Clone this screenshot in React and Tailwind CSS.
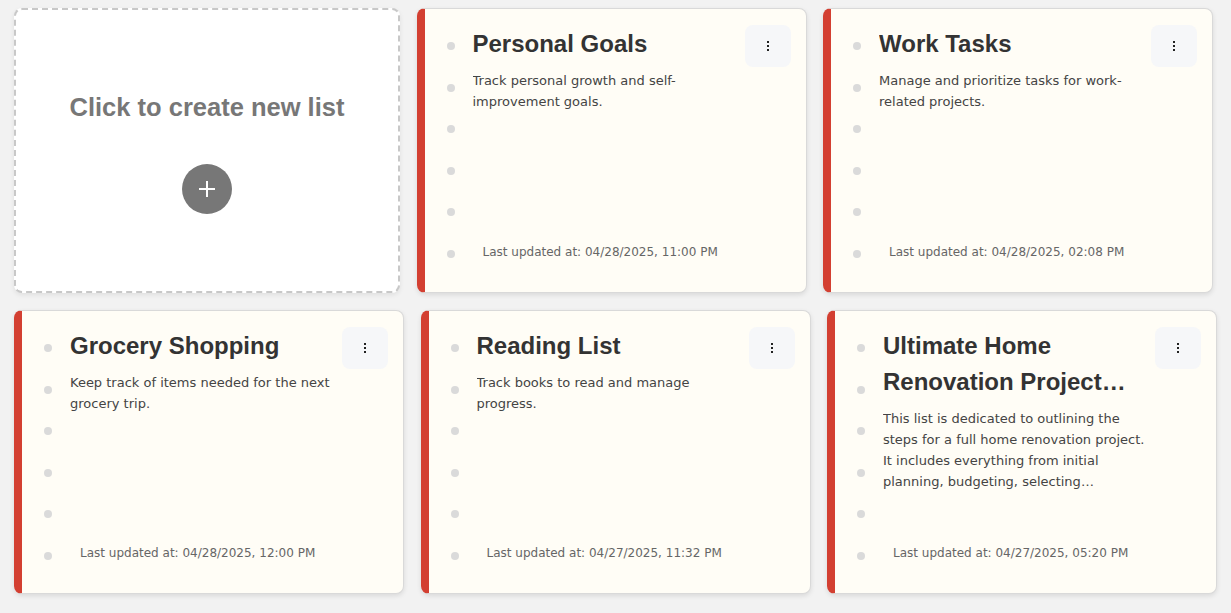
const lists = [
  {
    title: "Personal Goals",
    description: "Track personal growth and self-improvement goals.",
    updated: "04/28/2025, 11:00 PM",
  },
  {
    title: "Work Tasks",
    description: "Manage and prioritize tasks for work-related projects.",
    updated: "04/28/2025, 02:08 PM",
  },
  {
    title: "Grocery Shopping",
    description: "Keep track of items needed for the next grocery trip.",
    updated: "04/28/2025, 12:00 PM",
  },
  {
    title: "Reading List",
    description: "Track books to read and manage progress.",
    updated: "04/27/2025, 11:32 PM",
  },
  {
    title: "Ultimate Home Renovation Project Checklist",
    description:
      "This list is dedicated to outlining the steps for a full home renovation project. It includes everything from initial planning, budgeting, selecting contractors and materials, to the final walkthrough.",
    updated: "04/27/2025, 05:20 PM",
  },
];

function CreateCard() {
  return (
    <button className="flex h-[285px] w-[386px] flex-col items-center justify-center gap-[42px] rounded-lg border-2 border-dashed border-[#c8c8c8] bg-white pt-[5px] shadow-[0_2px_5px_rgba(0,0,0,0.08)]">
      <span className="text-[25.5px] font-bold leading-[30px] text-[#777777]">Click to create new list</span>
      <span className="flex h-[50px] w-[50px] items-center justify-center rounded-full bg-[#777777]">
        <svg width="18" height="18" viewBox="0 0 18 18">
          <path d="M9 1v16M1 9h16" stroke="white" strokeWidth="2" />
        </svg>
      </span>
    </button>
  );
}

function ListCard({ list, tall }) {
  return (
    <div
      className={`flex w-[390px] rounded-lg border border-[#d9d9d9] border-l-[8px] border-l-[#d33f31] bg-[#fffdf6] shadow-[0_2px_5px_rgba(0,0,0,0.1)] ${
        tall ? "h-[285px]" : "h-[284px]"
      }`}
    >
      <div className="flex flex-col gap-[33.6px] pl-[22px] pt-[33px]">
        {[0, 1, 2, 3, 4, 5].map((i) => (
          <span key={i} className="h-[8px] w-[8px] rounded-full bg-[#dadada]" />
        ))}
      </div>
      <div className="ml-[18px] flex min-w-0 flex-1 flex-col pb-[31px] pt-[17px]">
        <h2 className="line-clamp-2 text-[24px] font-bold leading-[36px] text-[#333333]">{list.title}</h2>
        <p className="mt-[8px] line-clamp-4 font-['DejaVu_Sans',sans-serif] text-[13px] leading-[21px] text-[#444444]">
          {list.description}
        </p>
        <p className="mt-auto whitespace-nowrap pl-[10px] font-['DejaVu_Sans',sans-serif] text-[12px] leading-[18px] text-[#666666]">
          Last updated at: {list.updated}
        </p>
      </div>
      <div className="mr-[15px] mt-[16px]">
        <button className="flex h-[42px] w-[46px] items-center justify-center rounded-lg bg-[#f6f7f9]">
          <svg width="2" height="12" viewBox="0 0 2 12">
            <rect x="0" y="1" width="2" height="2" fill="#222" />
            <rect x="0" y="5" width="2" height="2" fill="#222" />
            <rect x="0" y="9" width="2" height="2" fill="#222" />
          </svg>
        </button>
      </div>
    </div>
  );
}

export default function App() {
  return (
    <main className="min-h-screen bg-[#f2f2f2] font-['Liberation_Sans',Arial,sans-serif]">
      <div className="flex flex-wrap gap-x-[16.5px] gap-y-[17px] pl-[14px] pt-[8px]">
        <CreateCard />
        {lists.map((list, i) => (
          <ListCard key={list.title} list={list} tall={i < 2} />
        ))}
      </div>
    </main>
  );
}
